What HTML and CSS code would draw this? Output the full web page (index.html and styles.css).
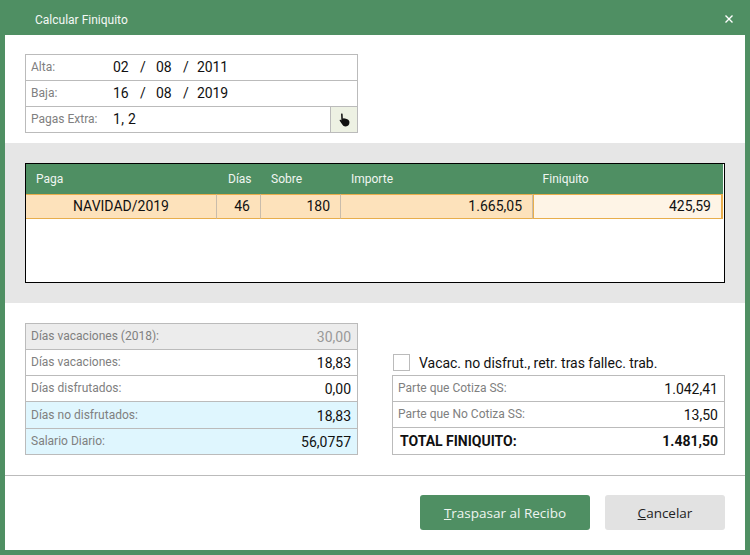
FILE: index.html
```html
<!DOCTYPE html>
<html lang="es">
<head>
<meta charset="utf-8">
<title>Calcular Finiquito</title>
<link rel="stylesheet" href="styles.css">
</head>
<body>
<div class="window">
  <header class="titlebar">
    <span class="title">Calcular Finiquito</span>
    <svg class="close" width="10" height="10" viewBox="0 0 10 10"><path d="M1.5 1.5 L8.5 8.5 M8.5 1.5 L1.5 8.5" stroke="#fff" stroke-width="1.4" fill="none"/></svg>
  </header>
  <main class="content">
    <section class="top">
      <div class="panel dates">
        <div class="row"><span class="label">Alta:</span><span class="date"><span>02</span><span>/</span><span>08</span><span>/</span><span>2011</span></span></div>
        <div class="row"><span class="label">Baja:</span><span class="date"><span>16</span><span>/</span><span>08</span><span>/</span><span>2019</span></span></div>
        <div class="row"><span class="label">Pagas Extra:</span><span class="val-left">1, 2</span>
          <span class="pick"><svg width="11" height="14" viewBox="0 0 12 15"><path d="M3 0.5 C3.8 0.5 4 1 4 2 L4.2 6 L5 5.6 L6.4 5.8 L7.6 6.2 L9 6.6 C10.6 7.2 11.4 8.4 11.4 10 C11.4 12.6 10 14.5 7.4 14.5 C5 14.5 4 13.4 3 11.6 L0.8 8.4 C0.4 7.6 1.2 6.8 2 7.4 L2.6 8 L2.3 2 C2.2 1 2.4 0.5 3 0.5 Z" fill="#111"/></svg></span></div>
      </div>
    </section>
    <section class="band">
      <table class="grid">
        <colgroup><col class="c1"><col class="c2"><col class="c3"><col class="c4"><col class="c5"></colgroup>
        <thead>
          <tr><th>Paga</th><th>Días</th><th>Sobre</th><th>Importe</th><th>Finiquito</th></tr>
        </thead>
        <tbody>
          <tr>
            <td class="center">NAVIDAD/2019</td>
            <td class="right">46</td>
            <td class="right">180</td>
            <td class="right">1.665,05</td>
            <td class="right current">425,59</td>
          </tr>
        </tbody>
      </table>
    </section>
    <section class="bottom">
      <div class="panel vac">
        <div class="row grey"><span class="label">Días vacaciones (2018):</span><span class="val muted">30,00</span></div>
        <div class="row"><span class="label">Días vacaciones:</span><span class="val">18,83</span></div>
        <div class="row"><span class="label">Días disfrutados:</span><span class="val">0,00</span></div>
        <div class="row blue tall"><span class="label">Días no disfrutados:</span><span class="val">18,83</span></div>
        <div class="row blue"><span class="label">Salario Diario:</span><span class="val">56,0757</span></div>
      </div>
      <div class="side">
        <label class="check"><span class="box"></span><span>Vacac. no disfrut., retr. tras fallec. trab.</span></label>
        <div class="panel totals">
          <div class="row"><span class="label">Parte que Cotiza SS:</span><span class="val">1.042,41</span></div>
          <div class="row"><span class="label">Parte que No Cotiza SS:</span><span class="val">13,50</span></div>
          <div class="row tall total"><span>TOTAL FINIQUITO:</span><span>1.481,50</span></div>
        </div>
      </div>
    </section>
    <footer class="actions">
      <button class="btn primary" type="button"><u>T</u>raspasar al Recibo</button>
      <button class="btn secondary" type="button"><u>C</u>ancelar</button>
    </footer>
  </main>
</div>
</body>
</html>
```
FILE: styles.css
```css
* { box-sizing: border-box; }
html, body { margin: 0; padding: 0; }
body { width: 750px; height: 555px; overflow: hidden; font-family: Roboto, "Liberation Sans", sans-serif; color: #111; }
.window { width: 750px; height: 555px; background: #4f8f63; display: flex; flex-direction: column; padding: 0 5px 5px 5px; }
.titlebar { height: 35px; flex: none; display: flex; align-items: center; justify-content: space-between; padding: 0 11px 0 30px; color: #f4f8f5; font-size: 12px; }
.title { margin-top: 4px; }
.close { margin-top: 3px; }
.content { flex: 1; background: #fff; display: flex; flex-direction: column; }

.top { height: 108px; flex: none; padding: 19px 20px 0; }
.panel { border: 1px solid #bbb; border-bottom: 0; }
.row { display: flex; align-items: center; height: 26px; border-bottom: 1px solid #bbb; padding: 0 6px 0 5px; }
.row.tall { height: 27px; }
.blue.tall { padding-top: 1px; }
.label { font-size: 12px; color: #808080; margin-bottom: 2px; }
.dates { width: 333px; height: 79px; }
.dates .row { padding-right: 0; }
.dates .label { width: 82px; flex: none; }
.date { display: flex; font-size: 14px; letter-spacing: -0.1px; margin-bottom: 1px; }
.date span:nth-child(1), .date span:nth-child(3) { width: 27px; }
.date span:nth-child(2), .date span:nth-child(4) { width: 16px; }
.date span:nth-child(4) { width: 14px; }
.val-left { font-size: 14px; letter-spacing: 0.3px; flex: 1; margin-bottom: 1px; }
.pick { width: 27px; height: 25px; flex: none; background: #edf1e3; border-left: 1px solid #bbb; display: flex; align-items: center; justify-content: center; }

.band { height: 160px; flex: none; background: #e6e6e6; padding: 20px; }
.grid { width: 700px; height: 120px; border: 1px solid #000; border-collapse: separate; border-spacing: 0; table-layout: fixed; background: #fff; display: block; font-size: 14px; }
.c1 { width: 191px; } .c2 { width: 44px; } .c3 { width: 80px; } .c4 { width: 192px; } .c5 { width: 190px; }
.grid thead th { height: 30px; background: #4f8f63; color: #f0f5f1; font-size: 12px; font-weight: 400; text-align: left; padding: 0 0 0 10px; }
.grid thead th:nth-child(2) { padding-left: 11px; }
.grid thead th:nth-child(5) { padding-left: 9.6px; }
.grid tbody td { height: 25px; background: #fde2bb; border-top: 1px solid #e8ae4c; border-bottom: 1px solid #e8ae4c; border-right: 1px solid #c9bcab; padding: 0 10px 2px 0; }
.grid .center { text-align: center; padding-right: 0; }
.grid .right { text-align: right; }
.grid tbody td.current { background: #fef4e6; border: 1px solid #e8ae4c; border-right-width: 2px; padding-right: 10px; }

.bottom { height: 173px; flex: none; padding: 20px 20px 0; display: flex; justify-content: space-between; border-bottom: 1px solid #bbb; }
.vac { width: 333px; height: 132px; }
.val { margin-left: auto; font-size: 14px; }
.muted { color: #999; }
.grey { background: #ececec; }
.blue { background: #dff6fe; }
.side { width: 333px; display: flex; flex-direction: column; padding-top: 31px; }
.check { display: flex; align-items: center; font-size: 14px; letter-spacing: -0.03px; height: 17px; margin-bottom: 4px; padding-left: 1px; }
.box { width: 17px; height: 17px; border: 1px solid #bbb; background: #fff; margin-right: 9px; flex: none; }
.totals .row { padding-right: 6px; }
.totals .label { margin-right: auto; }
.total { font-size: 14px; font-weight: 700; justify-content: space-between; padding-left: 7px; }

.actions { flex: 1; display: flex; justify-content: flex-end; gap: 15px; padding: 19px 20px 0; }
.btn { height: 35px; border: 0; border-radius: 3px; font-family: "Open Sans", sans-serif; font-size: 13.5px; padding: 0; cursor: pointer; }
.primary { width: 170px; background: #4f8f63; color: #eef4f0; }
.secondary { width: 120px; background: #e2e2e2; color: #222; }
```
